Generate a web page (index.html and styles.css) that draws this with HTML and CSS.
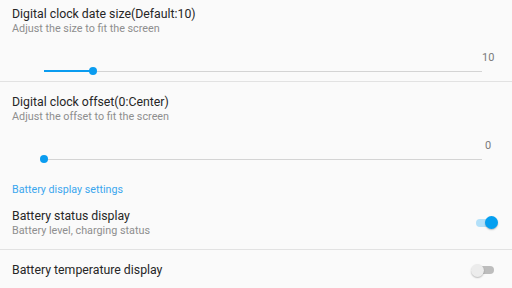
FILE: index.html
```html
<!DOCTYPE html>
<html>
<head>
<meta charset="utf-8">
<link rel="stylesheet" href="styles.css">
</head>
<body>
<div class="list">
  <div class="pref slider-pref first">
    <div class="title">Digital clock date size(Default:10)</div>
    <div class="summary">Adjust the size to fit the screen</div>
    <div class="seek">
      <div class="value">10</div>
      <div class="track"><div class="fill" style="width:49px"></div><div class="thumb" style="left:49px"></div></div>
    </div>
  </div>
  <div class="divider"></div>
  <div class="pref slider-pref">
    <div class="title">Digital clock offset(0:Center)</div>
    <div class="summary">Adjust the offset to fit the screen</div>
    <div class="seek">
      <div class="value">0</div>
      <div class="track"><div class="fill" style="width:0px"></div><div class="thumb" style="left:0px"></div></div>
    </div>
  </div>
  <div class="category">Battery display settings</div>
  <div class="pref switch-pref">
    <div class="texts">
      <div class="title">Battery status display</div>
      <div class="summary">Battery level, charging status</div>
    </div>
    <div class="toggle on"><div class="toggle-track"></div><div class="toggle-thumb"></div></div>
  </div>
  <div class="divider"></div>
  <div class="pref switch-pref">
    <div class="texts">
      <div class="title">Battery temperature display</div>
    </div>
    <div class="toggle"><div class="toggle-track"></div><div class="toggle-thumb"></div></div>
  </div>
</div>
</body>
</html>
```
FILE: styles.css
```css
html, body {
  margin: 0;
  padding: 0;
  background: #fafafa;
  width: 512px;
  height: 288px;
  overflow: hidden;
  font-family: Roboto, "Noto Sans", sans-serif;
}
.list {
  display: flex;
  flex-direction: column;
}
.pref {
  padding: 12px 0 0 12px;
}
.first {
  margin-top: -6px;
}
.title {
  font-size: 12.3px;
  line-height: 15px;
  padding-top: 1px;
  color: #262626;
}
.summary {
  font-size: 10.8px;
  line-height: 13px;
  color: #8e8e8e;
}
.seek {
  display: grid;
  grid-template-columns: 1fr 12px;
  grid-template-rows: 12px 14px;
  margin: 17px 18px 0 32px;
  padding-bottom: 3px;
}
.value {
  grid-column: 2;
  grid-row: 1;
  font-size: 11px;
  line-height: 12px;
  color: #7a7a7a;
  text-align: center;
}
.track {
  grid-column: 1;
  grid-row: 2;
  position: relative;
  align-self: center;
  height: 1px;
  background: #d4d4d4;
}
.fill {
  position: absolute;
  left: 0;
  top: -0.5px;
  height: 2px;
  background: #0a9cf0;
}
.thumb {
  position: absolute;
  top: -3.5px;
  width: 8px;
  height: 8px;
  margin-left: -4px;
  border-radius: 50%;
  background: #0a9cf0;
}
.divider {
  height: 1px;
  background: #e2e2e2;
}
.category {
  padding: 14px 0 0 12px;
  font-size: 10.7px;
  line-height: 13px;
  color: #3aa6ee;
}
.switch-pref {
  display: flex;
  align-items: center;
  padding: 12px 14px 12px 12px;
}
.texts {
  flex: 1;
}
.toggle {
  position: relative;
  width: 28px;
  height: 14px;
}
.toggle-track {
  position: absolute;
  left: 6px;
  right: 4px;
  top: 3px;
  height: 8px;
  border-radius: 4px;
  background: #bdbdbd;
}
.toggle-thumb {
  position: absolute;
  top: 0.5px;
  left: 1px;
  width: 13px;
  height: 13px;
  border-radius: 50%;
  background: #ececec;
  box-shadow: 0 1px 1.5px rgba(0,0,0,0.25);
}
.toggle.on .toggle-track {
  background: #b3e0f9;
}
.toggle.on .toggle-thumb {
  left: 15px;
  background: #059ff0;
}
```
